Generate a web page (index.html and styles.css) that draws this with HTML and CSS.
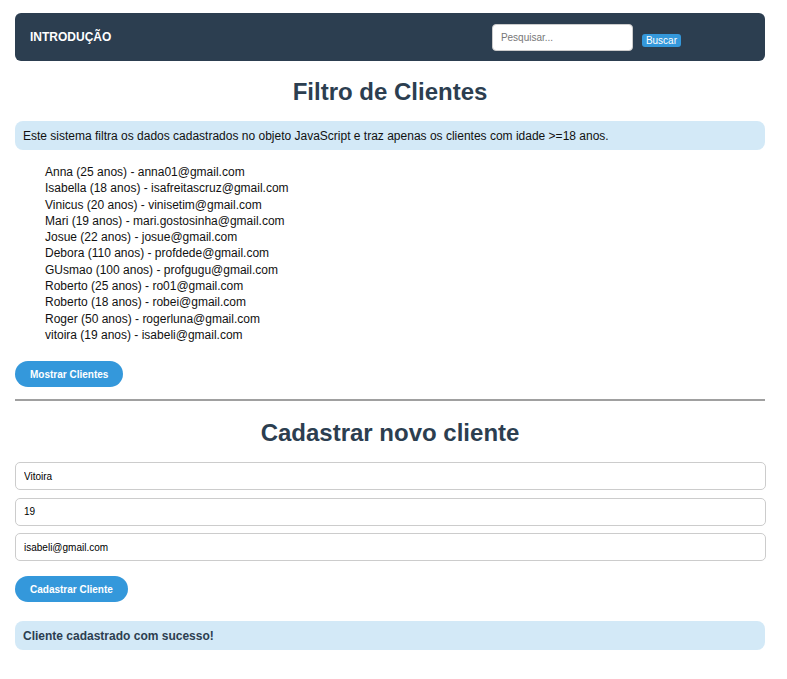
FILE: index.html
```html
<!DOCTYPE html>
<html lang="pt-BR">
<head>
<meta charset="utf-8">
<title>Filtro de Clientes</title>
<link rel="stylesheet" href="styles.css">
</head>
<body>
<div class="page">
  <header class="topbar">
    <span class="brand">INTRODUÇÃO</span>
    <form class="search">
      <input class="search-input" type="text" placeholder="Pesquisar...">
      <button class="search-btn" type="button">Buscar</button>
    </form>
  </header>

  <h1 class="title">Filtro de Clientes</h1>
  <p class="info">Este sistema filtra os dados cadastrados no objeto JavaScript e traz apenas os clientes com idade &gt;=18 anos.</p>

  <ul class="clients">
    <li>Anna (25 anos) - anna01@gmail.com</li>
    <li>Isabella (18 anos) - isafreitascruz@gmail.com</li>
    <li>Vinicus (20 anos) - vinisetim@gmail.com</li>
    <li>Mari (19 anos) - mari.gostosinha@gmail.com</li>
    <li>Josue (22 anos) - josue@gmail.com</li>
    <li>Debora (110 anos) - profdede@gmail.com</li>
    <li>GUsmao (100 anos) - profgugu@gmail.com</li>
    <li>Roberto (25 anos) - ro01@gmail.com</li>
    <li>Roberto (18 anos) - robei@gmail.com</li>
    <li>Roger (50 anos) - rogerluna@gmail.com</li>
    <li>vitoira (19 anos) - isabeli@gmail.com</li>
  </ul>

  <button class="pill" type="button">Mostrar Clientes</button>

  <hr class="divider">

  <h2 class="title">Cadastrar novo cliente</h2>

  <form class="form">
    <input class="field" type="text" value="Vitoira">
    <input class="field" type="text" value="19">
    <input class="field" type="text" value="isabeli@gmail.com">
    <div><button class="pill" type="button">Cadastrar Cliente</button></div>
  </form>

  <p class="message">Cliente cadastrado com sucesso!</p>
</div>
</body>
</html>
```

FILE: styles.css
```css
html, body {
  margin: 0;
  padding: 0;
  background: #ffffff;
}
body {
  font-family: "Liberation Sans", Arial, sans-serif;
  color: #111;
}
.page {
  width: 750px;
  padding: 13px 0 0 15px;
}
.topbar {
  background: #2c3e50;
  border-radius: 6px;
  height: 48px;
  display: flex;
  align-items: center;
  padding: 0 15px;
  box-sizing: border-box;
}
.brand {
  color: #fff;
  font-weight: bold;
  font-size: 12px;
  flex: 1;
}
.search {
  display: flex;
  align-items: center;
  gap: 9px;
  margin: 0 69px 0 0;
}
.search-input {
  width: 141px;
  height: 27px;
  box-sizing: border-box;
  border: 1px solid #ccc;
  border-radius: 4px;
  padding: 0 8px;
  font-family: "Liberation Sans", Arial, sans-serif;
  font-size: 10px;
  margin: 0 0 0 -1px;
}
.search-input::placeholder {
  color: #777;
}
.search-btn {
  background: #3498db;
  color: #fff;
  border: none;
  border-radius: 3px;
  font-family: "Liberation Sans", Arial, sans-serif;
  font-size: 10px;
  padding: 1px 4px;
  height: 13px;
  line-height: 11px;
  margin-top: 7px;
}
.title {
  text-align: center;
  color: #2c3e50;
  font-size: 24px;
  font-weight: bold;
  margin: 17px 0 0;
  line-height: 28px;
}
.info, .message {
  background: #d3e9f7;
  border-radius: 8px;
  margin: 15px 0 0;
  height: 29px;
  display: flex;
  align-items: center;
  padding: 0 8px;
  font-size: 12px;
}
.info {
  color: #111;
}
.clients {
  list-style: none;
  margin: 14px 0 0;
  padding: 0 0 0 30px;
  font-size: 12px;
  line-height: 16.3px;
  color: #111;
}
.pill {
  background: #3498db;
  color: #fff;
  border: none;
  border-radius: 13px;
  height: 26px;
  padding: 0 15px;
  font-family: "Liberation Sans", Arial, sans-serif;
  font-weight: bold;
  font-size: 10px;
}
.clients + .pill {
  margin-top: 18px;
  display: block;
}
.divider {
  border: none;
  border-top: 2px solid #a0a0a0;
  margin: 12px 0 0;
}
h2.title {
  margin-top: 18px;
}
.form {
  display: flex;
  flex-direction: column;
  gap: 7.5px;
  margin-top: 15px;
}
.field {
  width: 751px;
  height: 28px;
  box-sizing: border-box;
  border: 1px solid #ccc;
  border-radius: 5px;
  padding: 0 8px;
  font-family: "Liberation Sans", Arial, sans-serif;
  font-size: 10px;
  color: #000;
}
.form .pill {
  margin-top: 7.5px;
}
.message {
  margin-top: 19px;
  color: #2c3e50;
  font-weight: bold;
  font-size: 12px;
}
```
